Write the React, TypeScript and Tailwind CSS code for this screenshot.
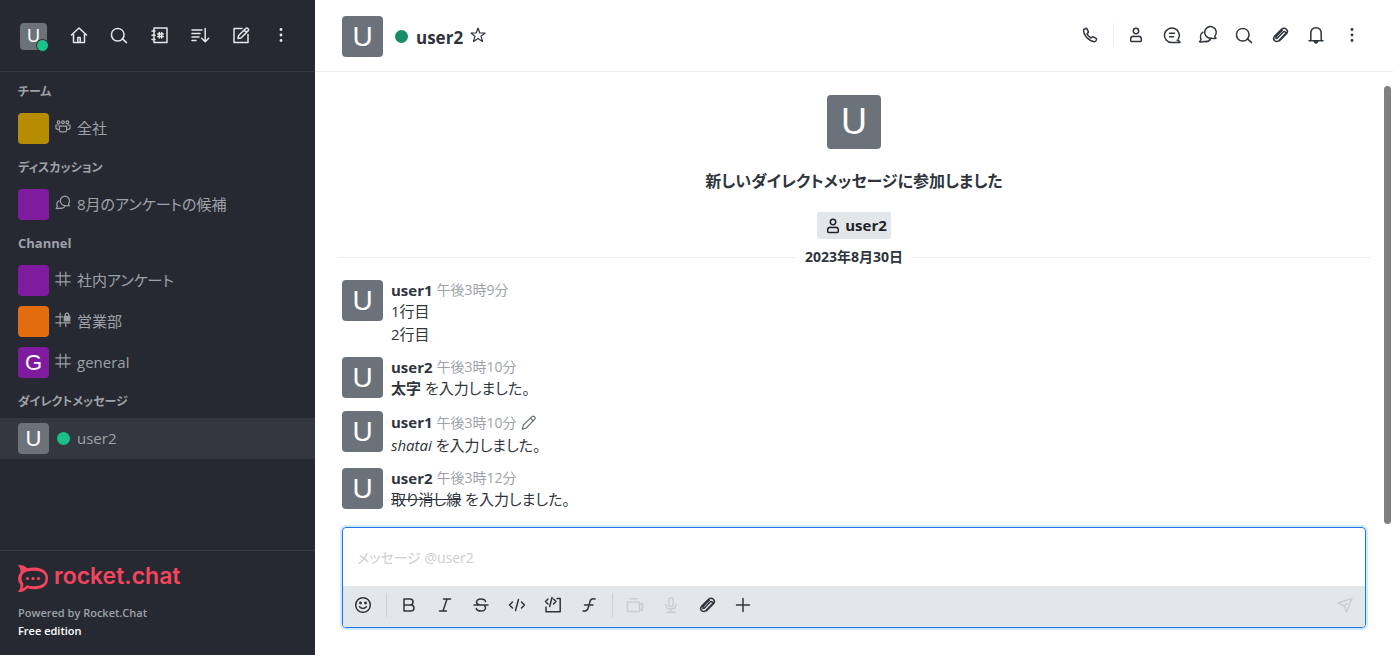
import React from 'react';
import clsx from 'clsx';

const icons: Record<string, React.ReactNode> = {
  home: <path d="M2.500 10 10 3l7.500 7M4.500 9v8.500h11V9M8.800 17v-4.500h2.400V17" />,
  search: <path d="M15 9A6.300 6.300 0 1 1 2.500 9 6.300 6.300 0 0 1 15 9ZM13.300 13.600l4.200 4" />,
  directory: (
    <>
      <path d="M4 3h13v14.500H4zM2 6h3M2 10.200h3M2 14.400h3" />
      <path d="M9.300 7.500v5.500M11.700 7.500v5.500M7.700 9h5.600M7.700 11.500h5.600" />
    </>
  ),
  sort: <path d="M2 5h10M2 8.500h8M2 12h7M2 15.500h4M15.200 3.500v13M11.700 13.200l3.500 3.500 3.500-3.500" />,
  edit: (
    <>
      <path d="M11 3.500H3v14h14V9.500" />
      <path d="m7 13.500.6-3 7.400-7.200q1-.6 2 .3t.3 2L10 13Zm6-8.400 2.300 2.300" />
    </>
  ),
  kebab: (
    <g fill="currentColor" stroke="none">
      <circle cx="10" cy="4.500" r="1.400" />
      <circle cx="10" cy="10" r="1.400" />
      <circle cx="10" cy="15.500" r="1.400" />
    </g>
  ),
  team: (
    <>
      <circle cx="4.500" cy="4" r="1.700" />
      <circle cx="10" cy="4" r="1.700" />
      <circle cx="15.500" cy="4" r="1.700" />
      <path d="M5.500 9h9v5q0 2-2 2h-5q-2 0-2-2ZM4.500 7.500H1.200V11q0 2 3 2M15.500 7.500h3.300V11q0 2-3 2" />
    </>
  ),
  discussion: (
    <>
      <path d="M16.800 11.200a5.800 5.800 0 1 0-3.600 1.900q2.300.8 4.800.1-1.100-.9-1.200-2Z" />
      <path d="M5 7.200a5.300 5.300 0 0 0-2 6.800q-.2 1.500-1.500 2.800 2.800.4 4.700-.4 4.300 1 6.300-2.400" />
    </>
  ),
  hash: <path d="M6.500 1.500v16.500M13.500 1.500v16.500M1 6h18M1 13.500h18" />,
  hashLock: (
    <>
      <path d="M6.500 1.500v16.500M13.500 13v5M1 6h8.500M1 13.500h18" />
      <path d="M11.500 5.500h7V11h-7Z" fill="currentColor" />
      <path d="M12.800 5.500V4q0-2.500 2.200-2.500T17.200 4v1.500" />
    </>
  ),
  star: <path d="m10 3 1.800 5h5.200l-4 3.200 1.500 5.300L10 13.500l-4.500 3L7 11.200 3 8h5.200Z" strokeWidth="1.200" />,
  phone: <path d="M4.200 4.200 6 3.400q.7-.2 1 .5l1.300 2.700q.3.800-.4 1.300l-.9.900q.8 2.300 4 4.200l1.100-.9q.6-.5 1.200-.2l2.700 1.500q.7.400.5 1.100l-.7 1.500q-.4.700-1.200.7Q10 16 6.500 12.200 3.500 8.700 3.500 5.200q0-.7.700-1Z" />,
  user: (
    <>
      <circle cx="10" cy="6" r="2.700" />
      <path d="M4.700 13.800q0-2.600 2.800-2.600 2.500.8 5 0 2.800 0 2.800 2.600v1.700q0 .9-.9.900H5.600q-.9 0-.9-.9Z" />
    </>
  ),
  threads: (
    <>
      <path d="M16.300 14a7.500 7.200 0 1 0-6.300 3.500h8q-.4-1.700-2.800-2.200" />
      <path d="M7.500 8.300h5M7.500 11.800h4" />
    </>
  ),
  clip: <path d="m7.200 13.200 6-6.200q1-1.200 2 0t0 2L9 15.500q-2.200 2-4.300.2t-.2-4.300l7-7q2.500-2.200 4.800-.2t.2 4.500l-7 7M7 10.500l5.200-5.200M6 13.500q-.5-1.500 1-3" />,
  bell: (
    <>
      <path d="M4.800 15.500V8.500Q4.800 2.700 10 2.700t5.200 5.800v7M3 15.700h14" />
      <path d="M8.500 16.500h3q-.3 1.500-1.500 1.500t-1.500-1.500Z" fill="currentColor" />
    </>
  ),
  pencil: <path d="m1.500 18 1.500-5.500L14 1.700q1.300-1 2.900.5t.4 3L6.500 16.200Zm10.300-14 3.500 3.500" />,
  emoji: (
    <>
      <circle cx="10" cy="10" r="7.300" />
      <path d="M6.500 11.800q3.500 3.400 7 0" />
      <circle cx="7.500" cy="8" r=".7" fill="currentColor" />
      <circle cx="12.500" cy="8" r=".7" fill="currentColor" />
    </>
  ),
  bold: <path d="M5 4h6q3 0 3 3t-3 3H5Zm0 6h6.800q3.200 0 3.200 3t-3.200 3H5Z" />,
  italic: <path d="M8.500 4h7M4.500 16h7M12 4 8 16" />,
  strike: <path d="M14.500 6.500Q14 4 10 4T5.500 7q0 2.300 3.500 3M5.300 13.500Q5.800 16 10 16t4.500-3q0-1.500-1-2.200M3 10h14" />,
  code: <path d="m5.500 7-3 3 3 3M14.500 7l3 3-3 3M11.500 4.500l-3 11" />,
  multiline: <path d="M14 3.500h3.200v13.300H3V12M5 4 2.500 6.500 5 9M10.500 4 13 6.500 10.500 9M9 2.500l-2.300 9" />,
  formula: <path d="M16 4q-4-1-5 2.500L9 13.500Q8.200 16.500 4 16M5.500 10h8.500" />,
  video: <path d="M2.500 7h12v9.500h-12ZM5 3.800h7M14.500 9.500l3-1.300v7l-3-1.300" />,
  mic: <path d="M7.800 5q0-2 2.200-2t2.200 2v4.500q0 2-2.200 2t-2.200-2ZM5 9.500q0 4.500 5 4.500t5-4.500M10 14v3.200M6 17.200h8" />,
  plus: <path d="M10 3.500v13M3.500 10h13" />,
  send: <path d="m3 8 14-4.500L11.500 17 9.200 11Zm6.200 3 3-2.700" />,
};

function Icon({ name, className }: { name: string; className?: string }) {
  return (
    <svg viewBox="0 0 20 20" className={clsx('shrink-0', className ?? 'size-5')} fill="none" stroke="currentColor" strokeWidth="1.500" strokeLinecap="round" strokeLinejoin="round" aria-hidden="true">
      {icons[name]}
    </svg>
  );
}

function IconButton({ name, label, disabled }: { name: string; label: string; disabled?: boolean }) {
  return (
    <button type="button" aria-label={label} disabled={disabled} className="flex size-8 items-center justify-center rounded disabled:text-[#cbced1]">
      <Icon name={name} />
    </button>
  );
}

function Divider({ className }: { className: string }) {
  return (
    <div className="flex w-1.5 justify-center">
      <div className={clsx('h-6 w-px', className)} />
    </div>
  );
}

function Avatar({ letter, className }: { letter?: string; className: string }) {
  return (
    <span className={clsx("flex shrink-0 items-center justify-center rounded-[4px] font-['Liberation_Sans'] leading-none text-white", className)}>
      {letter}
    </span>
  );
}

const toolbar = [
  ['home', 'ホーム'],
  ['search', '検索'],
  ['directory', 'ディレクトリ'],
  ['sort', '表示'],
  ['edit', '新規作成'],
  ['kebab', 'メニュー'],
];

const groups = [
  { title: 'チーム', size: 'text-xs', rooms: [{ name: '全社', icon: 'team', color: 'bg-[#b68d00]' }] },
  { title: 'ディスカッション', size: 'text-xs', rooms: [{ name: '8月のアンケートの候補', icon: 'discussion', color: 'bg-[#7f1b9f]' }] },
  {
    title: 'Channel',
    size: 'text-[13px]',
    rooms: [
      { name: '社内アンケート', icon: 'hash', color: 'bg-[#7f1b9f]' },
      { name: '営業部', icon: 'hashLock', color: 'bg-[#e26d0e]' },
      { name: 'general', icon: 'hash', color: 'bg-[#7f1b9f]', letter: 'G' },
    ],
  },
  { title: 'ダイレクトメッセージ', size: 'text-xs', rooms: [{ name: 'user2', icon: '', color: 'bg-[#6c727a]', letter: 'U', active: true }] },
];

const roomActions = [
  ['user', 'ユーザー情報'],
  ['threads', 'スレッド'],
  ['discussion', 'ディスカッション'],
  ['search', '検索'],
  ['clip', 'ファイル'],
  ['bell', '通知'],
  ['kebab', 'その他'],
];

const formatting = [
  ['bold', '太字'],
  ['italic', '斜体'],
  ['strike', '取り消し線'],
  ['code', 'コード'],
  ['multiline', '複数行コード'],
  ['formula', '数式'],
];

const messages = [
  { user: 'user1', time: '午後3時9分', edited: false, body: <>1行目<br />2行目</> },
  { user: 'user2', time: '午後3時10分', edited: false, body: <><strong>太字</strong> を入力しました。</> },
  { user: 'user1', time: '午後3時10分', edited: true, body: <><em>shatai</em> を入力しました。</> },
  { user: 'user2', time: '午後3時12分', edited: false, body: <><del>取り消し線</del> を入力しました。</> },
];

function Sidebar() {
  return (
    <aside className="flex w-[315px] shrink-0 flex-col bg-[#262931] text-[#9ea2a8]">
      <div className="flex h-[72px] items-center border-b border-[#353941] pt-px pr-[18px] pl-5">
        <button type="button" aria-label="user1" className="relative">
          <Avatar letter="U" className="size-[27px] bg-[#6c727a] text-lg" />
          <span className="absolute -right-0.5 -bottom-0.5 size-[13px] rounded-full border border-[#262931] bg-[#1cbf89]" />
        </button>
        <div className="ml-4 flex flex-1 justify-between pb-[3px] text-[#e4e7ea]">
          {toolbar.map(([name, label]) => (
            <IconButton key={name} name={name} label={label} />
          ))}
        </div>
      </div>

      <nav className="flex-1 pt-px">
        {groups.map((group) => (
          <section key={group.title}>
            <h2 className={clsx('flex h-[35px] items-center px-[18px] pt-0.5 font-bold', group.size)}>{group.title}</h2>
            {group.rooms.map((room) => (
              <a key={room.name} href="#" className={clsx('flex h-[41px] items-center px-[18px]', 'active' in room && 'bg-[#333840]')}>
                <Avatar letter={'letter' in room ? room.letter : undefined} className={clsx('size-[31px] text-[22px]', room.color)} />
                <span className="mx-1.5 flex w-4 justify-center pb-1">
                  {room.icon ? <Icon name={room.icon} className="size-4" /> : <span className="mt-1 size-[13px] rounded-full bg-[#1cbf89]" />}
                </span>
                <span className="truncate text-[15px]">{room.name}</span>
              </a>
            ))}
          </section>
        ))}
      </nav>

      <footer className="border-t border-[#353941] px-[18px] pt-[11px] pb-[15px]">
        <div className="flex h-8 items-center gap-1.5 text-[#f5455c]">
          <svg viewBox="0 0 30 27" className="h-[27px] w-[30px]" fill="none" aria-hidden="true">
            <path d="M0 .2Q5.500-.7 9.300 3.200 13 2.300 17.500 2.500 30 4 30 13.500T17.500 24.300q-4.500.3-8-1Q5.500 27.800 0 26.800q3-3 2.400-7.300Q0 17 0 13.500t2.400-6Q3 3.200 0 .2Z" fill="currentColor" />
            <path d="M3.500 13.500q0-7.700 12-7.700t12 7.700-12 7.700q-3.500 0-6.600-1-1.800 2.300-4.400 3.200 1.200-2.500.8-5-1.800-2-1.800-4.900Z" className="fill-[#262931]" />
            <g fill="currentColor">
              <circle cx="9.500" cy="13.500" r="1.600" />
              <circle cx="15" cy="13.500" r="1.600" />
              <circle cx="20.500" cy="13.500" r="1.600" />
            </g>
          </svg>
          <span className="pb-1 font-['Inter'] text-[23px] leading-7 font-semibold">rocket.chat</span>
        </div>
        <p className="mt-2.5 text-[11px] leading-[18px] font-semibold">Powered by Rocket.Chat</p>
        <p className="text-[11px] leading-[18px] font-semibold text-white">Free edition</p>
      </footer>
    </aside>
  );
}

function RoomHeader() {
  return (
    <header className="flex h-[72px] shrink-0 items-center border-b border-[#ebecef] pt-0.5 pr-[25px] pl-[27px]">
      <Avatar letter="U" className="size-[41px] bg-[#6c727a] text-[28px]" />
      <span className="mr-2 ml-3 size-[13px] rounded-full bg-[#158d65]" />
      <h1 className="pt-0.5 text-[17px] font-bold">user2</h1>
      <button type="button" aria-label="お気に入り" className="ml-[5px] pb-1">
        <Icon name="star" />
      </button>
      <div className="ml-auto flex items-center gap-1 pb-[3px]">
        <IconButton name="phone" label="通話" />
        <Divider className="bg-[#ebecef]" />
        {roomActions.map(([name, label]) => (
          <IconButton key={name} name={name} label={label} />
        ))}
      </div>
    </header>
  );
}

function Composer() {
  return (
    <div className="mx-[27px] mt-2.5 mb-[27px] overflow-hidden rounded-[4px] border border-[#1d74e5] ring-2 ring-[#d1ebfe]">
      <textarea aria-label="メッセージ" placeholder="メッセージ @user2" className="block h-[58px] w-full resize-none px-3.5 pt-[18px] text-sm leading-6 outline-none placeholder:text-[#cbced1]" />
      <div className="flex h-[41px] items-center gap-1 bg-[#e4e7ea] px-1 pb-1">
        <IconButton name="emoji" label="絵文字" />
        <Divider className="bg-[#cbced1]" />
        {formatting.map(([name, label]) => (
          <IconButton key={name} name={name} label={label} />
        ))}
        <Divider className="bg-[#cbced1]" />
        <IconButton name="video" label="ビデオメッセージ" disabled />
        <IconButton name="mic" label="音声メッセージ" disabled />
        <IconButton name="clip" label="ファイルを添付" />
        <IconButton name="plus" label="その他" />
        <div className="ml-auto">
          <IconButton name="send" label="送信" disabled />
        </div>
      </div>
    </div>
  );
}

export default function App() {
  return (
    <div className="flex min-h-screen bg-white font-['Open_Sans','Noto_Sans_CJK_JP',sans-serif] text-[#2f343d] [font-feature-settings:'palt']">
      <Sidebar />
      <main className="flex min-w-0 flex-1 flex-col">
        <RoomHeader />
        <div className="relative flex-1">
          <div className="flex flex-col items-center pt-[23px]">
            <Avatar letter="U" className="size-[54px] bg-[#6c727a] text-4xl" />
            <h2 className="mt-[18px] text-base leading-7 font-bold">新しいダイレクトメッセージに参加しました</h2>
            <a href="#" className="mt-[17px] flex h-[27px] items-center gap-0.5 rounded-[2px] bg-[#e4e7ea] pr-1 pl-1.5 text-[15px] font-bold text-[#1f2329]">
              <Icon name="user" />
              user2
            </a>
          </div>

          <div className="mx-[23px] mt-2 flex h-5 items-center gap-2.5 text-sm font-bold">
            <div className="h-px flex-1 bg-[#ebecef]" />
            2023年8月30日
            <div className="h-px flex-1 bg-[#ebecef]" />
          </div>

          <ul className="mt-2">
            {messages.map((message) => (
              <li key={message.time + message.user} className="flex gap-2 px-[27px] pt-[5px] pb-1.5">
                <Avatar letter="U" className="size-[41px] bg-[#6c727a] text-[28px]" />
                <div>
                  <div className={clsx('flex items-center gap-1 text-[15px]', message.edited ? 'h-[23px]' : 'h-5')}>
                    <span className="font-bold">{message.user}</span>
                    <time className="text-sm text-[#9ea2a8]">{message.time}</time>
                    {message.edited && <Icon name="pencil" className="size-4 text-[#6c727a]" />}
                  </div>
                  <p className="text-[15px] leading-[23px]">{message.body}</p>
                </div>
              </li>
            ))}
          </ul>
          <div className="absolute top-3.5 right-0.5 h-[438px] w-[7px] rounded-full bg-[#808080]" />
        </div>
        <Composer />
      </main>
    </div>
  );
}
